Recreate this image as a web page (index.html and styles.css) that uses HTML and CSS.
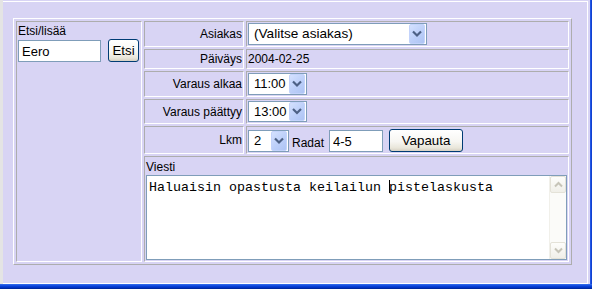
FILE: index.html
```html
<!DOCTYPE html>
<html lang="fi">
<head>
<meta charset="utf-8">
<title>Varaus</title>
<link rel="stylesheet" href="styles.css">
</head>
<body>
<div class="screen">
  <div class="main">
    <div class="strip"></div>
    <div class="frame">
      <form class="booking">
        <div class="cell search">
          <div class="search-title">Etsi/lisää</div>
          <div class="search-row">
            <input class="field field-name" type="text" value="Eero">
            <button class="btn btn-etsi" type="button">Etsi</button>
          </div>
        </div>

        <div class="cell label">Asiakas</div>
        <div class="cell value">
          <div class="sel sel-customer">
            <span class="sel-text">(Valitse asiakas)</span>
            <span class="sel-btn"><svg viewBox="0 0 16 20" width="16" height="20"><polyline points="4,7.5 8,11.5 12,7.5" fill="none" stroke="#4d6185" stroke-width="2.2"/></svg></span>
          </div>
        </div>

        <div class="cell label">Päiväys</div>
        <div class="cell value"><span class="text">2004-02-25</span></div>

        <div class="cell label">Varaus alkaa</div>
        <div class="cell value">
          <div class="sel sel-time">
            <span class="sel-text">11:00</span>
            <span class="sel-btn"><svg viewBox="0 0 16 20" width="16" height="20"><polyline points="4,7.5 8,11.5 12,7.5" fill="none" stroke="#4d6185" stroke-width="2.2"/></svg></span>
          </div>
        </div>

        <div class="cell label">Varaus päättyy</div>
        <div class="cell value">
          <div class="sel sel-time sel-short">
            <span class="sel-text">13:00</span>
            <span class="sel-btn"><svg viewBox="0 0 16 19" width="16" height="19"><polyline points="4,7 8,11 12,7" fill="none" stroke="#4d6185" stroke-width="2.2"/></svg></span>
          </div>
        </div>

        <div class="cell label">Lkm</div>
        <div class="cell value value-bottom">
          <div class="sel sel-count">
            <span class="sel-text">2</span>
            <span class="sel-btn"><svg viewBox="0 0 16 20" width="16" height="20"><polyline points="4,7.5 8,11.5 12,7.5" fill="none" stroke="#4d6185" stroke-width="2.2"/></svg></span>
          </div>
          <span class="text inline-label">Radat</span>
          <input class="field field-lanes" type="text" value="4-5">
          <button class="btn btn-free" type="button">Vapauta</button>
        </div>

        <div class="cell message">
          <div class="message-title">Viesti</div>
          <div class="memo">
            <textarea class="memo-text" spellcheck="false">Haluaisin opastusta keilailun pistelaskusta</textarea>
            <div class="scroll">
              <span class="scroll-btn"><svg viewBox="0 0 15 15" width="15" height="15"><polyline points="4,9.5 7.5,6 11,9.5" fill="none" stroke="#c6c4b8" stroke-width="2"/></svg></span>
              <span class="scroll-btn"><svg viewBox="0 0 15 15" width="15" height="15"><polyline points="4,5.5 7.5,9 11,5.5" fill="none" stroke="#c6c4b8" stroke-width="2"/></svg></span>
            </div>
            <span class="caret"></span>
          </div>
        </div>
      </form>
    </div>
    <div class="gap"></div>
    <div class="vbar"></div>
  </div>
  <div class="hbar"></div>
  <div class="foot"></div>
</div>
</body>
</html>
```

FILE: styles.css
```css
* { box-sizing: border-box; }

html, body { margin: 0; padding: 0; }

body {
  width: 592px;
  height: 292px;
  overflow: hidden;
  background: #d8d4f4;
  font-family: "Liberation Sans", Arial, sans-serif;
  font-size: 12px;
  color: #000;
}

.screen { display: flex; flex-direction: column; width: 592px; height: 292px; }
.main { display: flex; height: 284px; }
.strip { width: 3px; background: #e4e4e4; }

.frame {
  width: 585px;
  height: 283px;
  margin-top: 1px;
  border-top: 1px solid #fff;
  border-right: 1px solid #fff;
  border-bottom: 1px solid #fff;
  padding: 16px 0 0 10px;
}

.gap { width: 2px; }
.vbar { width: 2px; background: linear-gradient(to right, #2a62ee, #0a36c8); }
.hbar { height: 5px; background: linear-gradient(#3a72ee, #0a44dc 40%, #0034c4 70%, #00248e); }
.foot { height: 3px; background: #fff; }

/* table-like grid */
.booking {
  display: grid;
  grid-template-columns: 126px 100px 323px;
  grid-template-rows: 26px 20px 26px 25px 28px 106px;
  gap: 2px;
  padding: 2px;
  width: 559px;
  margin: 0;
  border: 1px solid;
  border-color: #fff #adadad #adadad #fff;
}

.cell {
  border: 1px solid;
  border-color: #adadad #fff #fff #adadad;
  padding: 1px;
  min-width: 0;
  min-height: 0;
}

.search { grid-row: 1 / 7; grid-column: 1; }
.search-title { line-height: 16px; white-space: nowrap; }
.search-row { display: flex; align-items: flex-end; }

.label {
  display: flex;
  align-items: center;
  justify-content: flex-end;
  white-space: nowrap;
}

.value { display: flex; align-items: center; }
.value-bottom { align-items: flex-end; }

.text { line-height: 16px; white-space: nowrap; }
.inline-label { margin-left: 3px; margin-bottom: 1px; }

/* inputs */
.field {
  height: 22px;
  margin: 0;
  padding: 0 3px;
  border: 1px solid #7f9db9;
  background: #fff;
  font: 13px "Liberation Sans", Arial, sans-serif;
  color: #000;
  outline: none;
}
.field-name { width: 83px; }
.field-lanes { width: 54px; margin-left: 5px; }

/* buttons */
.btn {
  height: 23px;
  margin: 0;
  padding: 0;
  border: 1px solid #003c74;
  border-radius: 3px;
  background: linear-gradient(#ffffff, #f7f6f2 55%, #e9e6da 85%, #d6d0c2);
  font: 13.333px "Liberation Sans", Arial, sans-serif;
  color: #000;
}
.btn-etsi { width: 31px; margin-left: 7px; }
.btn-free { width: 74px; margin-left: 6px; }

/* selects */
.sel {
  display: flex;
  height: 22px;
  border: 1px solid #7f9db9;
  background: #fff;
  padding-right: 1px;
  font-size: 13px;
}
.sel-short { height: 21px; }
.sel-text {
  flex: 1;
  padding-left: 5px;
  line-height: 20px;
  white-space: nowrap;
  overflow: hidden;
}
.sel-short .sel-text { line-height: 19px; }
.sel-btn {
  flex: none;
  display: block;
  width: 16px;
  border: 1px solid #c3d3fb;
  border-radius: 2px;
  background: linear-gradient(135deg, #d4e1fe, #bccff9 55%, #aec4f4);
}
.sel-btn svg { display: block; margin: -1px; }
.sel-customer { width: 179px; font-size: 13.6px; }
.sel-time { width: 59px; }
.sel-count { width: 41px; }

/* message */
.message {
  grid-column: 2 / 4;
  grid-row: 6;
  display: flex;
  flex-direction: column;
}
.message-title { line-height: 17px; height: 17px; padding-top: 1px; }

.memo {
  position: relative;
  display: flex;
  width: 421px;
  height: 85px;
  border: 1px solid #7f9db9;
  background: #fff;
}
.memo-text {
  flex: 1;
  margin: 0;
  border: 0;
  padding: 4px 2px 3px;
  background: transparent;
  font: 13.333px "Liberation Mono", "Courier New", monospace;
  line-height: 15px;
  color: #000;
  resize: none;
  overflow: hidden;
  outline: none;
}
.scroll {
  flex: none;
  width: 17px;
  display: flex;
  flex-direction: column;
  justify-content: space-between;
  background: #fbfbf9;
  border-left: 1px solid #f1f0ea;
}
.scroll-btn {
  display: block;
  width: 16px;
  height: 17px;
  border: 1px solid #e4e2d8;
  border-radius: 2px;
  background: linear-gradient(#fdfdfb, #f0efe9);
}
.scroll-btn svg { display: block; }

.caret {
  position: absolute;
  left: 242px;
  top: 4px;
  width: 1px;
  height: 13px;
  background: #000;
}
```
